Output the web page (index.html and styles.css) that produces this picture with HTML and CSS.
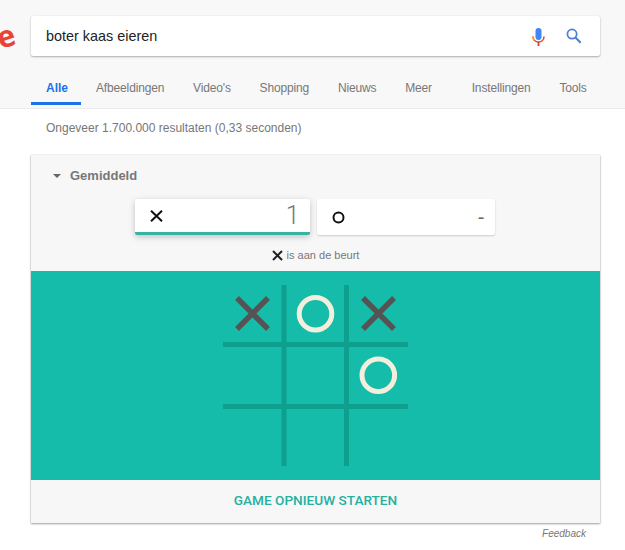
FILE: index.html
```html
<!DOCTYPE html>
<html lang="nl">

<head>
  <meta charset="UTF-8" />
  <title>boter kaas eieren</title>
  <link rel="stylesheet" href="styles.css">
</head>

<body>
  <!-- Top of the results page -->
  <header class="header">
    <div class="search-row">
      <div class="logo"><span class="logo-letter">e</span></div>
      <div class="search-box">
        <span class="search-text">boter kaas eieren</span>
        <svg class="mic-icon" width="13" height="18" viewBox="0 0 13 18">
          <rect x="3.500" y="0" width="6" height="12" rx="3" fill="#4285f4" />
          <path d="M1 8.500c0 3.300 2.400 5.500 5.500 5.500s5.500-2.200 5.500-5.500" fill="none" stroke="#ea4335" stroke-width="1.600" />
          <path d="M1 8.500c0 1.300.4 2.500 1.200 3.400" fill="none" stroke="#f4a81c" stroke-width="1.600" />
          <rect x="5.600" y="14" width="1.800" height="4" fill="#c9483a" />
        </svg>
        <svg class="search-icon" width="16" height="16" viewBox="0 0 18 18">
          <circle cx="6.800" cy="6.800" r="5.200" fill="none" stroke="#4d7fd8" stroke-width="2" />
          <path d="M10.600 10.600L16.500 16.500" stroke="#4d7fd8" stroke-width="2.400" />
        </svg>
      </div>
    </div>
    <nav class="tabs">
      <a class="tab tab-active">Alle</a>
      <a class="tab">Afbeeldingen</a>
      <a class="tab">Video's</a>
      <a class="tab">Shopping</a>
      <a class="tab">Nieuws</a>
      <a class="tab">Meer</a>
      <a class="tab tab-settings">Instellingen</a>
      <a class="tab">Tools</a>
    </nav>
  </header>

  <p class="result-stats">Ongeveer 1.700.000 resultaten (0,33 seconden)</p>

  <!-- Game card -->
  <section class="game-card">
    <div class="level"><span class="level-arrow"></span>Gemiddeld</div>

    <div class="scores">
      <div class="score score-active">
        <svg width="13" height="12" viewBox="0 0 13 12">
          <path d="M1 .7L12 11.300M12 .7L1 11.300" stroke="#111" stroke-width="2" />
        </svg>
        <span class="score-number">1</span>
      </div>
      <div class="score">
        <svg width="13" height="13" viewBox="0 0 13 13">
          <circle cx="6.500" cy="6.500" r="5" fill="none" stroke="#111" stroke-width="2" />
        </svg>
        <span class="score-number score-dash">-</span>
      </div>
    </div>

    <div class="turn">
      <svg width="11" height="11" viewBox="0 0 11 11">
        <path d="M1 1L10 10M10 1L1 10" stroke="#222" stroke-width="2" />
      </svg>
      <span>is aan de beurt</span>
    </div>

    <div class="board">
      <svg width="186" height="182" viewBox="0 0 186 182">
        <g fill="#0e9f8e">
          <rect x="58.500" y="0" width="5" height="181" />
          <rect x="121" y="0" width="5" height="181" />
          <rect x="0" y="57" width="185" height="5" />
          <rect x="0" y="119" width="185" height="5" />
        </g>
        <g stroke="#545454" stroke-width="5.500" fill="none">
          <path d="M14 13L45 44M45 13L14 44" />
          <path d="M140 13L171 44M171 13L140 44" />
        </g>
        <g stroke="#f3efdc" stroke-width="5" fill="none">
          <circle cx="92.500" cy="28.700" r="16.300" />
          <circle cx="155.300" cy="90.300" r="16.300" />
        </g>
      </svg>
    </div>

    <button class="restart" type="button">GAME OPNIEUW STARTEN</button>
  </section>

  <div class="feedback">Feedback</div>
</body>

</html>
```

FILE: styles.css
```css
html,
body {
  margin: 0;
  padding: 0;
  background-color: #fff;
  overflow: hidden;
}

body {
  width: 625px;
  height: 550px;
  font-family: "Liberation Sans", Arial, sans-serif;
  color: #777;
}

/* Header */
.header {
  height: 108px;
  background-color: #f8f8f8;
  border-bottom: 1px solid #ebebeb;
}

.search-row {
  display: flex;
  padding-top: 16px;
}

.logo {
  width: 31px;
  height: 40px;
  display: flex;
  justify-content: flex-end;
  align-items: center;
}

.logo-letter {
  margin-right: 16px;
  font-family: "Open Sans", sans-serif;
  font-size: 30px;
  font-weight: 700;
  line-height: 40px;
  color: #ea4335;
  transform: rotate(-18deg);
}

.search-box {
  width: 569px;
  height: 40px;
  box-sizing: border-box;
  padding: 0 18px 0 15px;
  display: flex;
  align-items: center;
  background-color: #fff;
  border-radius: 2px;
  box-shadow: 0 1px 2px rgba(0, 0, 0, 0.3), 0 0 1px rgba(0, 0, 0, 0.12);
}

.search-text {
  flex: 1;
  font-size: 14.400px;
  color: #222;
}

.mic-icon {
  margin-right: 21px;
  margin-top: 1px;
}

.search-icon {
  margin-bottom: 1px;
}

.tabs {
  display: flex;
  margin-top: 16px;
  padding-left: 31px;
}

.tab {
  flex-shrink: 0;
  height: 33px;
  padding-top: 9px;
  box-sizing: border-box;
  margin-right: 28.800px;
  font-size: 12px;
  letter-spacing: -0.150px;
  line-height: 14px;
  color: #777;
}

.tab-active {
  width: 50px;
  margin-right: 15px;
  padding-left: 15px;
  font-weight: 700;
  letter-spacing: 0;
  color: #1a73e8;
  border-bottom: 3px solid #1a73e8;
}

.tab-settings {
  margin-left: 11px;
}

.result-stats {
  margin: 12px 0 0 46px;
  font-size: 12px;
  line-height: 14px;
  color: #777;
}

/* Game card */
.game-card {
  width: 569px;
  height: 368px;
  margin: 20px 0 0 31px;
  background-color: #f7f7f7;
  box-shadow: 0 1px 2px rgba(0, 0, 0, 0.35), 0 0 1px rgba(0, 0, 0, 0.25);
  display: flex;
  flex-direction: column;
}

.level {
  height: 44px;
  padding: 13px 0 0 22px;
  box-sizing: border-box;
  display: flex;
  align-items: flex-start;
  font-size: 13px;
  font-weight: 700;
  line-height: 15px;
  color: #777;
}

.level-arrow {
  width: 0;
  height: 0;
  margin: 6px 9px 0 0;
  border-left: 4px solid transparent;
  border-right: 4px solid transparent;
  border-top: 4px solid #666;
}

.scores {
  display: flex;
  justify-content: center;
  gap: 7px;
  padding-right: 2px;
}

.score {
  width: 178px;
  height: 36px;
  box-sizing: border-box;
  padding: 0 10px 0 15px;
  display: flex;
  align-items: center;
  justify-content: space-between;
  background-color: #fff;
  border-radius: 2px;
  box-shadow: 0 1px 2px rgba(0, 0, 0, 0.18);
}

.score-active {
  width: 175px;
  box-shadow: 0 2px 6px rgba(0, 0, 0, 0.22);
  border-bottom: 3px solid #35b3a3;
}

.score-number {
  font-family: Roboto, sans-serif;
  font-size: 25px;
  font-weight: 300;
  color: #777;
}

.score-dash {
  font-family: "Liberation Sans", Arial, sans-serif;
  font-size: 20px;
  font-weight: 400;
  color: #666;
}

.turn {
  height: 36px;
  padding-top: 4px;
  box-sizing: border-box;
  display: flex;
  align-items: center;
  justify-content: center;
  gap: 4px;
  font-size: 11px;
  color: #777;
}

.board {
  height: 209px;
  padding: 14px 0 0 1px;
  box-sizing: border-box;
  display: flex;
  justify-content: center;
  background-color: #15bcaa;
}

.restart {
  flex: 1;
  padding: 0 0 4px;
  border: 0;
  background: none;
  font-family: Roboto, sans-serif;
  font-size: 13.600px;
  font-weight: 500;
  color: #26b09f;
}

.feedback {
  margin: 5px 39px 0 0;
  text-align: right;
  font-size: 10px;
  font-style: italic;
  line-height: 12px;
  color: #777;
}
```
